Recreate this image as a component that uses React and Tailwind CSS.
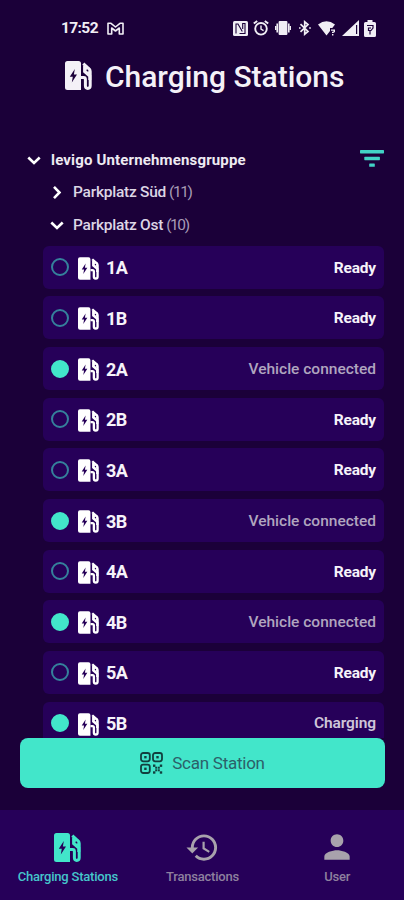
import clsx from "clsx";
import { MdHistory, MdPerson } from "react-icons/md";

const stations = [
  { name: "1A", status: "Ready" },
  { name: "1B", status: "Ready" },
  { name: "2A", status: "Vehicle connected" },
  { name: "2B", status: "Ready" },
  { name: "3A", status: "Ready" },
  { name: "3B", status: "Vehicle connected" },
  { name: "4A", status: "Ready" },
  { name: "4B", status: "Vehicle connected" },
  { name: "5A", status: "Ready" },
  { name: "5B", status: "Charging" },
];

const StationIcon = ({ className }) => (
  <svg viewBox="0 0 27 29" className={className} fill="none">
    {/* Column with the bolt cut out */}
    <path
      fill="currentColor"
      fillRule="evenodd"
      d="M2.5 0H13.5Q16 0 16 2.5V29H2.5Q0 29 0 26.5V2.5Q0 0 2.5 0ZM9.8 8L4.8 15.8H7.8L6.8 21.5L12 13.4H8.9Z"
    />
    {/* Hose and nozzle */}
    <path
      d="M18.3 2.6L24.2 8Q25.2 9 25.2 10.5V24.8Q25.2 27.4 22.8 27.4Q20.4 27.4 20.4 24.8V18.5Q20.4 16.6 18.6 16.6H16"
      stroke="currentColor"
      strokeWidth="3"
    />
    <path d="M19.6 5V10.5L24.8 15V19" stroke="currentColor" strokeWidth="3" />
    <circle cx="22.6" cy="9.4" r="2.2" stroke="currentColor" strokeWidth="2" />
  </svg>
);

const Chevron = ({ className }) => (
  <svg viewBox="0 0 14 9" className={clsx("w-3.5 h-[9px]", className)} fill="none">
    <path d="M1.3 1.5L7 7L12.7 1.5" stroke="currentColor" strokeWidth="2.6" />
  </svg>
);

const QrIcon = () => (
  <svg viewBox="0 0 23 22" className="w-[23px] h-[22px]" fill="none" stroke="#12403f">
    <g strokeWidth="1.8">
      <rect x="1" y="1" width="8.8" height="8.3" rx="2.2" />
      <rect x="13" y="1" width="9" height="8.3" rx="2.2" />
      <rect x="1" y="12.7" width="8.8" height="8.3" rx="2.2" />
    </g>
    <g fill="#12403f" stroke="none">
      <rect x="4.2" y="4" width="2.4" height="2.4" />
      <rect x="16.3" y="4" width="2.4" height="2.4" />
      <rect x="4.2" y="15.6" width="2.4" height="2.4" />
      <rect x="13" y="12.5" width="2.4" height="2.4" />
      <rect x="19.8" y="12.5" width="2.4" height="2.4" />
      <rect x="15.2" y="14.7" width="2" height="2" />
      <rect x="17.8" y="14.7" width="2" height="2" />
      <rect x="15.2" y="17.3" width="2" height="2" />
      <rect x="17.8" y="17.3" width="2" height="2" />
      <rect x="13" y="19.3" width="2.4" height="2.4" />
      <rect x="19.8" y="19.3" width="2.4" height="2.4" />
    </g>
  </svg>
);

const StatusBar = () => (
  <div className="h-14 pl-[61px] pr-7 flex items-center text-[#f1eef5]">
    <span className="pt-px text-[15.5px] font-bold tracking-[-0.6px]">17:52</span>
    <svg viewBox="0 0 17 13" className="ml-[9px] w-[17px] h-[13px]" fill="none">
      <path
        d="M1 1.3H4L8.5 5L13 1.3H16V12H12.3V6L8.5 9L4.7 6V12H1Z"
        stroke="currentColor"
        strokeWidth="1.6"
        strokeLinejoin="round"
      />
    </svg>

    <div className="ml-auto flex items-center">
      {/* NFC */}
      <svg viewBox="0 0 15 15" className="w-[15px] h-[15px]">
        <rect width="15" height="15" rx="1.5" fill="currentColor" />
        <path
          d="M3 12.5V3H5L9.3 10.5M6.5 12.5H12V2.5H9.7V8"
          fill="none"
          stroke="#1b0039"
          strokeWidth="1.1"
        />
      </svg>
      {/* Alarm */}
      <svg
        viewBox="0 0 16 16"
        className="ml-[5px] size-4"
        fill="none"
        stroke="currentColor"
        strokeWidth="1.9"
      >
        <circle cx="8" cy="8.8" r="5.8" />
        <path d="M0.8 3.6L4.2 0.9M15.2 3.6L11.8 0.9" />
        <path d="M8 5.4V9.2L10.6 10.6" strokeWidth="1.4" />
      </svg>
      {/* Vibrate */}
      <svg viewBox="0 0 16 14" className="ml-[6px] w-4 h-3.5" fill="currentColor">
        <rect x="3.6" width="8.8" height="14" rx="1" />
        <path d="M1.4 2.5H3V11.5H1.4ZM0 5H1.2V9H0ZM13 2.5H14.6V11.5H13ZM14.8 5H16V9H14.8Z" />
      </svg>
      {/* Bluetooth */}
      <svg
        viewBox="0 0 12 16"
        className="ml-[8px] w-3 h-4"
        fill="none"
        stroke="currentColor"
        strokeWidth="1.7"
      >
        <path d="M1.5 4.2L9 11.4L5.7 14.2V1.8L9 4.6L1.5 11.8" />
        <path d="M0 7.2H1.6V8.8H0ZM10.2 7.2H11.8V8.8H10.2Z" fill="currentColor" stroke="none" />
      </svg>
      {/* Wifi */}
      <svg viewBox="0 0 18 15" className="ml-[7px] w-[18px] h-[15px]" fill="currentColor">
        <path d="M0 3.5Q8.5-3 17 3.5L14.3 7H12V10L8.5 14.5Z" />
        <path d="M13 8.5H17V11L15.3 12H14V10.8H15.5V9.7H13ZM14 13H15.4V14.4H14Z" />
      </svg>
      {/* Signal */}
      <svg viewBox="0 0 17 16" className="ml-[6px] w-[17px] h-4" fill="currentColor">
        <path fillRule="evenodd" d="M17 0V16H0ZM14 5V14H15.2V5Z" />
      </svg>
      {/* Battery */}
      <svg viewBox="0 0 12 17" className="ml-[5px] w-3 h-[17px]">
        <path
          fill="currentColor"
          d="M3.5 0H8.5V2H10.5Q12 2 12 3.5V15.5Q12 17 10.5 17H1.5Q0 17 0 15.5V3.5Q0 2 1.5 2H3.5Z"
        />
        <path
          d="M3 5.5H9V8L7 10.5H4.5V8H7M6 10V14.5"
          fill="none"
          stroke="#1b0039"
          strokeWidth="1.2"
        />
      </svg>
    </div>
  </div>
);

const StationRow = ({ name, status }) => {
  const ready = status === "Ready";

  return (
    <li className="h-[43px] shrink-0 rounded-md bg-[#260059] pl-2 pr-2 flex items-center">
      <span
        className={clsx(
          "size-[18px] rounded-full border-2",
          ready ? "border-[#35819c]" : "border-[#42e6ca] bg-[#42e6ca]"
        )}
      />
      <StationIcon className="ml-[9px] mt-0.5 w-[21px] h-[23px] text-white" />
      <span className="ml-[7px] pt-px text-[18px] font-bold text-[#f6f3fa] tracking-[-0.6px]">
        {name}
      </span>
      <span
        className={clsx(
          "ml-auto pt-[2px] text-[15.5px]",
          ready && "font-bold text-[#f6f3fa] tracking-[-0.15px]",
          status === "Charging" && "font-semibold text-[#cfc6d9] tracking-[-0.1px]",
          status === "Vehicle connected" && "font-medium text-[#b0a5bf]"
        )}
      >
        {status}
      </span>
    </li>
  );
};

const GroupRow = ({ label, count, open }) => (
  <div className="h-8 pt-[1px] pl-[50px] flex items-center">
    <Chevron className={clsx("text-white", !open && "-rotate-90")} />
    <span className="ml-[9px] text-[15.5px] font-medium tracking-[-0.25px]">
      {label}
    </span>
    <span className="ml-[3px] text-[15.5px] text-[#a79bb5] tracking-[-1.4px]">
      ({count})
    </span>
  </div>
);

const NavItem = ({ label, active, children }) => (
  <button
    className={clsx(
      "w-[134.67px] pt-5 flex flex-col items-center",
      active ? "text-[#42e6ca]" : "text-[#a8a2ac]"
    )}
  >
    <span className="h-[34px] pl-px flex items-center justify-center">{children}</span>
    <span
      className={clsx(
        "mt-[5px] pl-px text-[13px] leading-4 font-medium tracking-[-0.22px] whitespace-nowrap",
        active ? "text-[#45c6cb]" : "text-[#8e809f]"
      )}
    >
      {label}
    </span>
  </button>
);

const App = () => {
  return (
    <div className="w-[404px] h-[900px] overflow-hidden flex flex-col bg-[#1b0039] font-['Roboto',sans-serif]">
      <StatusBar />

      <header className="h-[42px] pl-[65px] flex items-center text-[#f4f1f7]">
        <StationIcon className="mt-[-4px] w-[27px] h-[29px]" />
        <h1 className="ml-[13px] text-[30px] leading-10 font-medium tracking-[-0.02px] whitespace-nowrap">
          Charging Stations
        </h1>
      </header>

      <main className="mt-[46px] h-[594px] shrink-0 overflow-hidden text-[#ddd6e5]">
        <div className="h-8 pl-[27px] pr-5 flex items-center">
          <Chevron className="text-white" />
          <span className="ml-[10px] text-[15px] font-bold text-[#eeeaf2] tracking-[0.16px] whitespace-nowrap">
            levigo Unternehmensgruppe
          </span>
          <svg viewBox="0 0 24 17" className="ml-auto mt-[-3px] w-6 h-[17px]" fill="#42d2c6">
            <rect width="24" height="3.4" rx="0.6" />
            <rect x="4.3" y="6.8" width="15.6" height="3.4" rx="0.6" />
            <rect x="9.2" y="13.4" width="5.6" height="3.4" rx="0.6" />
          </svg>
        </div>
        <GroupRow label="Parkplatz Süd" count={11} />
        <div className="h-px" />
        <GroupRow label="Parkplatz Ost" count={10} open />

        <ul className="mt-[4.8px] ml-[43px] mr-5 flex flex-col gap-[7.65px]">
          {stations.map((station) => (
            <StationRow key={station.name} {...station} />
          ))}
        </ul>
      </main>

      <button className="ml-5 mr-[19px] h-[50px] shrink-0 rounded-lg bg-[#42e6ca] flex items-center justify-center">
        <QrIcon />
        <span className="ml-[9px] pt-px text-[17px] text-[#2c6069] tracking-[-0.25px]">
          Scan Station
        </span>
      </button>

      <nav className="mt-[22px] h-[90px] shrink-0 bg-[#260059] flex">
        <NavItem label="Charging Stations" active>
          <StationIcon className="w-[27px] h-[29px]" />
        </NavItem>
        <NavItem label="Transactions">
          <MdHistory className="size-[35px]" />
        </NavItem>
        <NavItem label="User">
          <MdPerson className="size-[38px]" />
        </NavItem>
      </nav>
    </div>
  );
};

export default App;
